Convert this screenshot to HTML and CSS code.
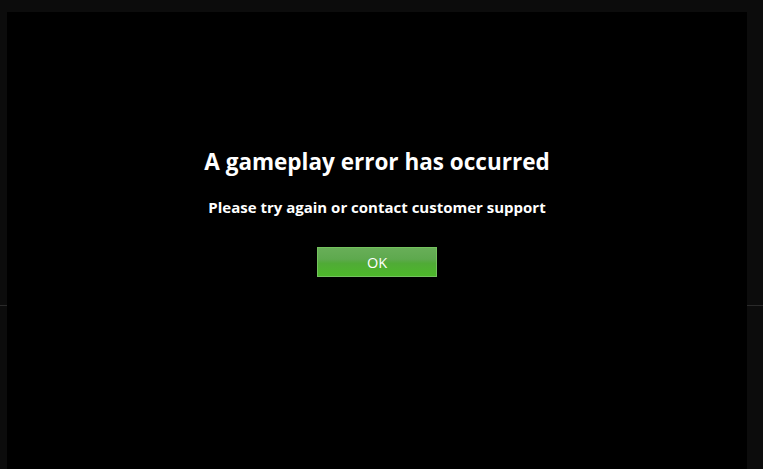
FILE: index.html
```html
<!DOCTYPE html>
<html>
<head>
<meta charset="utf-8">
<link rel="stylesheet" href="styles.css">
</head>
<body>
<div class="frame">
  <div class="side left"><div class="tick"></div></div>
  <main class="panel">
    <h1 class="title">A gameplay error has occurred</h1>
    <p class="subtitle">Please try again or contact customer support</p>
    <button class="ok">OK</button>
  </main>
  <div class="side right"><div class="tick"></div></div>
</div>
</body>
</html>
```
FILE: styles.css
```css
html, body {
  margin: 0;
  padding: 0;
  background: #0c0c0c;
  height: 100%;
}
.frame {
  display: flex;
  height: 469px;
  padding-top: 12px;
  box-sizing: border-box;
}
.side {
  background: #0c0c0c;
  padding-top: 293px;
}
.side.left { width: 7px; }
.side.right { width: 16px; }
.tick {
  height: 1px;
  background: #2a2a2a;
}
.panel {
  flex: 1;
  background: #000;
  display: flex;
  flex-direction: column;
  align-items: center;
  padding-top: 134px;
  font-family: "Open Sans", "Liberation Sans", sans-serif;
  color: #fff;
}
.title {
  margin: 0;
  font-size: 22.5px;
  font-weight: 700;
  line-height: 32px;
}
.subtitle {
  margin: 18px 0 0;
  font-size: 15px;
  font-weight: 700;
  line-height: 22px;
}
.ok {
  margin-top: 29px;
  width: 120px;
  height: 30px;
  border: 1px solid #74c25e;
  background: linear-gradient(to bottom, #68ae58 0%, #5ea94e 40%, #50ab36 55%, #4db82a 100%);
  color: #fff;
  font-family: "Open Sans", "Liberation Sans", sans-serif;
  font-size: 14.5px;
  font-weight: 500;
  padding: 1px 0 0;
  cursor: pointer;
}
```
